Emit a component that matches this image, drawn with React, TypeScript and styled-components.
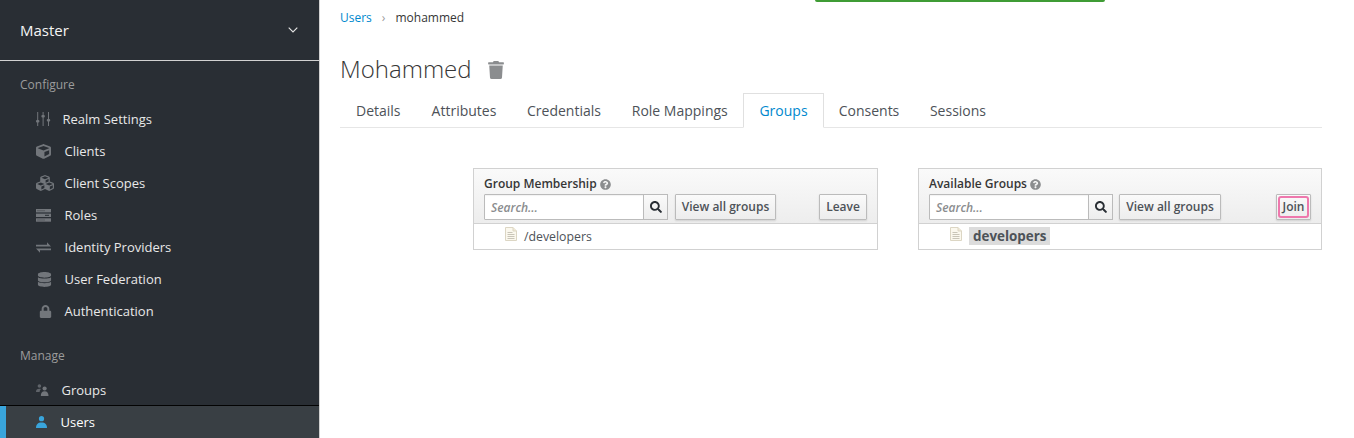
import React from "react";
import styled, { createGlobalStyle } from "styled-components";
import { FaCube, FaCubes, FaDatabase, FaLock, FaQuestionCircle, FaSearch, FaTrash } from "react-icons/fa";

const Global = createGlobalStyle`
  html, body { margin: 0; padding: 0; height: 100%; background: #fff; overflow: hidden; }
  body { font-family: "Open Sans", "Liberation Sans", sans-serif; font-size: 13px; color: #4d5258; }
  * { box-sizing: border-box; }
`;

const Page = styled.div`
  display: flex;
  width: 1354px;
  height: 438px;
  position: relative;
  overflow: hidden;
`;

const Sidebar = styled.nav`
  width: 320px;
  height: 438px;
  flex: none;
  background: #292e34;
  border-right: 1px solid #d1d1d1;
`;

const RealmHeader = styled.div`
  height: 61px;
  padding: 0 20px 1px;
  display: flex;
  align-items: center;
  justify-content: space-between;
  border-bottom: 1px solid #d1d1d1;
  color: #f5f5f5;
  font-size: 15px;
  svg { margin-top: 1px; margin-right: 1px; }
`;

const SectionTitle = styled.div<{ $top: number }>`
  color: #9c9c9c;
  font-size: 12px;
  line-height: 16px;
  padding-left: 20px;
  margin-top: ${(p) => p.$top}px;
  margin-bottom: 10px;
`;

const Item = styled.div<{ $active?: boolean }>`
  height: 32px;
  display: flex;
  align-items: center;
  font-size: 13px;
  color: ${(p) => (p.$active ? "#fff" : "#e8e8e8")};
  padding-left: ${(p) => (p.$active ? "30px" : "36px")};
  background: ${(p) => (p.$active ? "#393f44" : "transparent")};
  border-left: ${(p) => (p.$active ? "6px solid #39a5dc" : "none")};
  ${(p) => (p.$active ? "box-shadow: 0 -1px 0 #030303;" : "")}
  svg { display: block; }
`;

const IconSlot = styled.span<{ $w: number; $active?: boolean }>`
  width: ${(p) => p.$w}px;
  flex: none;
  display: flex;
  color: ${(p) => (p.$active ? "#39a5dc" : "#72767b")};
`;

const Main = styled.main`
  flex: 1;
  padding-left: 20px;
  padding-right: 32px;
  min-width: 0;
`;

const Breadcrumb = styled.div`
  height: 35px;
  padding-top: 9px;
  display: flex;
  align-items: flex-start;
  font-size: 12px;
  line-height: 18px;
  color: #363636;
`;

const Crumb = styled.a`
  color: #0088ce;
`;

const Sep = styled.span`
  color: #9c9c9c;
  margin: 0 10px;
`;

const TitleRow = styled.div`
  height: 58px;
  padding-top: 17px;
  display: flex;
  align-items: flex-start;
  color: #363636;
`;

const Title = styled.h1`
  margin: 0;
  font-weight: 300;
  font-size: 24px;
  line-height: 34px;
`;

const Trash = styled.span`
  margin-left: 15px;
  margin-top: 9px;
  color: #8b8d8f;
  display: flex;
`;

const Tabs = styled.div`
  display: flex;
  height: 35px;
  border-bottom: 1px solid #e6e6e6;
`;

const Tab = styled.div<{ $active?: boolean; $w: number }>`
  width: ${(p) => p.$w}px;
  height: 35px;
  text-align: center;
  font-size: 14px;
  line-height: 34px;
  color: ${(p) => (p.$active ? "#0088ce" : "#4d5258")};
  border: 1px solid ${(p) => (p.$active ? "#e0e0e0" : "transparent")};
  border-bottom: ${(p) => (p.$active ? "1px solid #fff" : "none")};
`;

const Panels = styled.div`
  display: flex;
  gap: 40px;
  margin: 40px 0 0 133px;
`;

const Panel = styled.section<{ $w: number }>`
  width: ${(p) => p.$w}px;
  height: 82px;
  border: 1px solid #d1d1d1;
`;

const PanelHead = styled.div`
  height: 55px;
  padding: 7px 10px 0;
  background: linear-gradient(#fafafa, #ededed);
  border-bottom: 1px solid #d1d1d1;
`;

const PanelTitle = styled.div`
  font-size: 12px;
  line-height: 16px;
  font-weight: 600;
  color: #363636;
  display: flex;
  align-items: center;
  gap: 3px;
  svg { color: #8b8d8f; font-size: 11px; }
`;

const Toolbar = styled.div`
  display: flex;
  margin-top: 2px;
  height: 26px;
`;

const SearchInput = styled.div`
  width: 160px;
  height: 26px;
  border: 1px solid #bbb;
  border-radius: 1px 0 0 1px;
  background: #fff;
  font-size: 12px;
  font-style: italic;
  font-weight: 600;
  color: #8b8d8f;
  line-height: 26px;
  padding-left: 6px;
  box-shadow: inset 0 1px 1px rgba(3,3,3,0.05);
`;

const SearchBtn = styled.div`
  width: 25px;
  height: 26px;
  margin-left: -1px;
  border: 1px solid #bbb;
  background: linear-gradient(#fafafa, #ededed);
  display: flex;
  align-items: center;
  justify-content: center;
  color: #292e34;
  font-size: 12px;
`;

const Button = styled.div<{ $w: number; $end?: boolean; $left?: number }>`
  width: ${(p) => p.$w}px;
  height: 26px;
  margin-left: ${(p) => (p.$end ? "auto" : `${p.$left ?? 7}px`)};
  padding-bottom: 2px;
  border: 1px solid #bbb;
  border-radius: 1px;
  background: linear-gradient(#fafafa, #ededed);
  box-shadow: 0 1px 2px rgba(3,3,3,0.12);
  font-size: 12px;
  font-weight: 600;
  color: #4d5258;
  display: flex;
  align-items: center;
  justify-content: center;
`;

const FocusLabel = styled.span`
  width: 31px;
  height: 22px;
  margin-top: 2px;
  border: 2px solid #ee78ad;
  border-radius: 3px;
  line-height: 17px;
  text-align: center;
  display: block;
`;

const Row = styled.div`
  height: 25px;
  padding: 0 0 1px 31px;
  display: flex;
  align-items: center;
  font-size: 12.3px;
  color: #4d5258;
`;

const FileSlot = styled.span`
  display: flex;
  margin-right: 7px;
  margin-top: -4px;
`;

const Selected = styled.span`
  background: #dcdcdc;
  font-weight: 700;
  font-size: 13.4px;
  line-height: 18px;
  padding: 0 4px;
  color: #4d5258;
`;

const Alert = styled.div`
  position: absolute;
  left: 815px;
  top: -10px;
  width: 290px;
  height: 12px;
  border: 1px solid #3f9c35;
  border-bottom-width: 2px;
  border-radius: 2px;
  background: #fff;
`;

const SlidersIcon = () => (
  <svg width="15" height="14" viewBox="0 0 15 14" fill="currentColor">
    <rect x="1.2" y="0" width="1" height="14" />
    <rect x="0" y="8" width="3.4" height="2.6" rx="1" />
    <rect x="6.6" y="0" width="1" height="14" />
    <rect x="5.4" y="3" width="3.4" height="2.6" rx="1" />
    <rect x="12" y="0" width="1" height="14" />
    <rect x="10.8" y="7" width="3.4" height="2.6" rx="1" />
  </svg>
);

const ServerIcon = () => (
  <svg width="15" height="13" viewBox="0 0 15 13" fill="currentColor">
    <rect y="0" width="15" height="3.4" />
    <rect y="4.6" width="15" height="3.4" />
    <rect y="9.3" width="15" height="3.4" />
    <rect x="1" y="1.2" width="8" height="1" fill="#292e34" opacity="0.35" />
    <rect x="9" y="5.8" width="4" height="1" fill="#292e34" />
    <rect x="1" y="10.5" width="8" height="1" fill="#292e34" opacity="0.35" />
  </svg>
);

const ExchangeIcon = () => (
  <svg width="15" height="11" viewBox="0 0 15 11" fill="currentColor">
    <path d="M0 2.8h11V.2l4 4.2H0z" />
    <path d="M15 8.2H4v2.6L0 6.6h15z" />
  </svg>
);

const GroupsIcon = () => (
  <svg width="13" height="12" viewBox="0 0 13 12" fill="currentColor">
    <circle cx="3.4" cy="2" r="1.8" opacity="0.75" />
    <path d="M0 8c0-2 1-3.2 3.4-3.2.6 0 1.1.1 1.5.3C4 6 3.6 7 3.6 8z" opacity="0.75" />
    <circle cx="8.6" cy="4.5" r="2.1" />
    <path d="M4.8 12c0-3 1.2-4.8 3.8-4.8s3.9 1.8 3.9 4.8z" />
  </svg>
);

const UserIcon = () => (
  <svg width="11" height="12" viewBox="0 0 11 12" fill="currentColor">
    <circle cx="5.5" cy="2.7" r="2.6" />
    <path d="M0 12c0-3.6 1.8-5.6 5.5-5.6S11 8.4 11 12z" />
  </svg>
);

const FileIcon = () => (
  <svg width="12" height="14" viewBox="0 0 12 14">
    <path d="M.5.5h7.5l3.5 3.5v9.5H.5z" fill="#fbf8ee" stroke="#dcd6c4" />
    <path d="M8 .5V4h3.5" fill="#f1ead6" stroke="#dcd6c4" />
    <path d="M2.5 5.5h5M2.5 7.5h7M2.5 9.5h7M2.5 11.5h7" stroke="#c9c5b8" strokeWidth="1" />
  </svg>
);

const Chevron = () => (
  <svg width="10" height="6" viewBox="0 0 10 6" fill="none" stroke="#e6e6e6" strokeWidth="1.1">
    <path d="M.7.7 5 5l4.3-4.3" />
  </svg>
);

const nav1 = [
  { label: "Realm Settings", w: 26.5, icon: <SlidersIcon /> },
  { label: "Clients", w: 28.5, icon: <FaCube size={15} /> },
  { label: "Client Scopes", w: 28.5, icon: <FaCubes size={18} /> },
  { label: "Roles", w: 28.5, icon: <ServerIcon /> },
  { label: "Identity Providers", w: 28.5, icon: <ExchangeIcon /> },
  { label: "User Federation", w: 28.5, icon: <FaDatabase size={15} style={{ marginLeft: 1 }} /> },
  { label: "Authentication", w: 28.5, icon: <FaLock size={13} style={{ marginLeft: 3 }} /> },
];

const tabs = [
  { label: "Details", w: 76.5 },
  { label: "Attributes", w: 95 },
  { label: "Credentials", w: 105 },
  { label: "Role Mappings", w: 126.5 },
  { label: "Groups", w: 81, active: true },
  { label: "Consents", w: 90 },
  { label: "Sessions", w: 88 },
];

export default function App() {
  return (
    <Page>
      <Global />
      <Sidebar>
        <RealmHeader>
          Master
          <Chevron />
        </RealmHeader>
        <SectionTitle $top={16}>Configure</SectionTitle>
        {nav1.map((n) => (
          <Item key={n.label}>
            <IconSlot $w={n.w}>{n.icon}</IconSlot>
            {n.label}
          </Item>
        ))}
        <SectionTitle $top={21}>Manage</SectionTitle>
        <Item>
          <IconSlot $w={25.5}><GroupsIcon /></IconSlot>
          Groups
        </Item>
        <Item $active>
          <IconSlot $w={24.5} $active><UserIcon /></IconSlot>
          Users
        </Item>
      </Sidebar>
      <Main>
        <Breadcrumb>
          <Crumb>Users</Crumb>
          <Sep>›</Sep>
          mohammed
        </Breadcrumb>
        <TitleRow>
          <Title>Mohammed</Title>
          <Trash><FaTrash size={18} /></Trash>
        </TitleRow>
        <Tabs>
          {tabs.map((t) => (
            <Tab key={t.label} $w={t.w} $active={t.active}>{t.label}</Tab>
          ))}
        </Tabs>
        <Panels>
          <Panel $w={405}>
            <PanelHead>
              <PanelTitle>Group Membership <FaQuestionCircle /></PanelTitle>
              <Toolbar>
                <SearchInput>Search...</SearchInput>
                <SearchBtn><FaSearch /></SearchBtn>
                <Button $w={101}>View all groups</Button>
                <Button $w={48} $end>Leave</Button>
              </Toolbar>
            </PanelHead>
            <Row>
              <FileSlot><FileIcon /></FileSlot>
              /developers
            </Row>
          </Panel>
          <Panel $w={404}>
            <PanelHead>
              <PanelTitle>Available Groups <FaQuestionCircle /></PanelTitle>
              <Toolbar>
                <SearchInput>Search...</SearchInput>
                <SearchBtn><FaSearch /></SearchBtn>
                <Button $w={102} $left={6}>View all groups</Button>
                <Button $w={35} $end><FocusLabel>Join</FocusLabel></Button>
              </Toolbar>
            </PanelHead>
            <Row>
              <FileSlot><FileIcon /></FileSlot>
              <Selected>developers</Selected>
            </Row>
          </Panel>
        </Panels>
      </Main>
      <Alert />
    </Page>
  );
}
